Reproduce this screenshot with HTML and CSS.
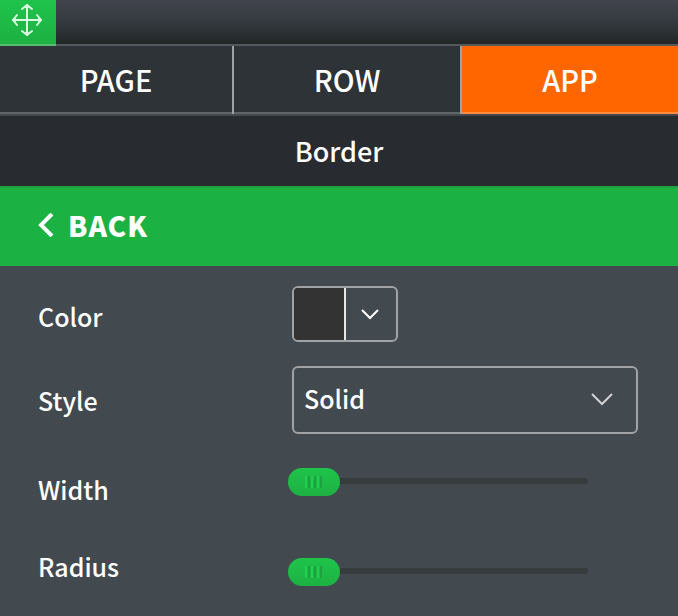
FILE: index.html
```html
<!DOCTYPE html>
<html lang="en">
<head>
  <meta charset="UTF-8">
  <title>Border</title>
  <link rel="stylesheet" href="styles.css">
</head>
<body>
  <div class="panel">
    <!-- Drag handle -->
    <header class="topbar">
      <button type="button" class="move" aria-label="Move panel">
        <svg width="32" height="34" viewBox="0 0 32 34" fill="none" stroke="#d9f7e1" stroke-width="2" stroke-linecap="round" stroke-linejoin="round">
          <path d="M16 2v30M2 17h28" />
          <path d="M11 6l5-4 5 4M11 28l5 4 5-4" />
          <path d="M6 12l-4 5 4 5M26 12l4 5-4 5" />
          <path d="M15 3h2v1h-2zM15 31h2v-1h-2zM3 16v2h1v-2zM29 16v2h-1v-2z" />
        </svg>
      </button>
    </header>

    <nav class="tabs">
      <button type="button" class="tab tab-page">PAGE</button>
      <button type="button" class="tab tab-row">ROW</button>
      <button type="button" class="tab tab-app active">APP</button>
    </nav>

    <h1 class="title">Border</h1>

    <button type="button" class="back">
      <svg width="16" height="24" viewBox="0 0 16 24" fill="none" stroke="#fff" stroke-width="4">
        <path d="M14 1L3 12l11 11" />
      </svg>
      BACK
    </button>

    <!-- Border settings -->
    <form class="settings">
      <div class="field field-color">
        <label for="color">Color</label>
        <div class="color-picker">
          <input type="color" id="color" value="#333333">
          <button type="button" class="color-toggle" aria-label="Choose color">
            <svg width="20" height="12" viewBox="0 0 20 12" fill="none" stroke="#fff" stroke-width="2">
              <path d="M1 2l8 8 8-8" />
            </svg>
          </button>
        </div>
      </div>

      <div class="field">
        <label for="style">Style</label>
        <div class="select-box">
          <select id="style">
            <option>Solid</option>
            <option>Dashed</option>
            <option>Dotted</option>
          </select>
          <svg class="arrow" width="22" height="14" viewBox="0 0 22 14" fill="none" stroke="#d0d2d3" stroke-width="2">
            <path d="M1 2l10 10L21 2" />
          </svg>
        </div>
      </div>

      <div class="field field-width">
        <label for="width">Width</label>
        <input type="range" id="width" min="0" max="20" value="0">
      </div>

      <div class="field field-radius">
        <label for="radius">Radius</label>
        <input type="range" id="radius" min="0" max="50" value="0">
      </div>
    </form>
  </div>
</body>
</html>
```
FILE: styles.css
```css
* {
  box-sizing: border-box;
}
body {
  margin: 0;
  background: #42494f;
  color: #fff;
  font-family: "Noto Sans CJK SC", "Noto Sans", sans-serif;
  font-weight: 500;
}
button,
select {
  margin: 0;
  padding: 0;
  border: 0;
  background: none;
  color: inherit;
  font: inherit;
}
svg {
  display: block;
}

/* top bar */
.topbar {
  display: flex;
  height: 46px;
  background: linear-gradient(#41444e, #353a40 45%, #222627 96%);
  box-shadow: inset 0 -2px #56595b;
}
.move {
  width: 56px;
  padding: 3px 11px 9px;
  background: linear-gradient(#1fc34a, #1db143);
  border-bottom: 2px solid #54bd6e;
}

/* tabs */
.tabs {
  display: flex;
  border-bottom: 2px solid #434a4f;
}
.tab {
  height: 68px;
  background: #2e3337;
  border-right: 2px solid #a0a3a5;
  box-shadow: inset 0 -2px #616568;
  font-size: 29px;
  line-height: 66px;
  padding-bottom: 2px;
}
.tab-page {
  flex: 232;
}
.tab-row {
  flex: 226;
}
.tab-app {
  flex: 216;
  border-right: 0;
}
.tab.active {
  background: #ff6600;
  box-shadow: inset 0 -2px #ff8b3f;
}

.title {
  margin: 0;
  background: #282b2f;
  font-size: 27px;
  font-weight: 500;
  line-height: 70px;
  text-align: center;
}
.back {
  display: flex;
  align-items: center;
  gap: 14px;
  width: 100%;
  height: 80px;
  padding: 0 38px 5px;
  background: #1cb143;
  border-top: 2px solid #1f9f40;
  font-size: 28px;
  font-weight: 900;
  letter-spacing: 1px;
}

/* settings */
.settings {
  padding: 20px 40px 20px 38px;
}
.field {
  display: grid;
  grid-template-columns: 250px 1fr;
  align-items: center;
  margin-bottom: 24px;
}
.field label {
  font-size: 25px;
  line-height: 34px;
}
.field-color label {
  padding-top: 4px;
}
.color-picker {
  display: flex;
  width: 106px;
  height: 56px;
  margin-left: 4px;
  border: 2px solid #a0a3a5;
  border-radius: 6px;
  overflow: hidden;
}
input[type="color"] {
  appearance: none;
  width: 52px;
  height: 52px;
  padding: 0;
  border: 0;
  border-right: 2px solid #e6e7e7;
  background: none;
}
input[type="color"]::-webkit-color-swatch-wrapper {
  padding: 0;
}
input[type="color"]::-webkit-color-swatch {
  border: 0;
  border-radius: 0;
}
.color-toggle {
  display: flex;
  flex: 1;
  align-items: center;
  justify-content: center;
}
.select-box {
  position: relative;
  margin-left: 4px;
}
select {
  display: block;
  appearance: none;
  width: 100%;
  height: 68px;
  padding: 0 10px 4px;
  border: 2px solid #a0a3a5;
  border-radius: 6px;
  font-size: 25px;
}
.arrow {
  position: absolute;
  top: 26px;
  right: 25px;
  pointer-events: none;
}

/* sliders */
input[type="range"] {
  appearance: none;
  width: 300px;
  height: 28px;
  margin: 0;
  background: none;
}
input[type="range"]::-webkit-slider-runnable-track {
  height: 6px;
  background: #363b3e;
  border-radius: 3px;
}
input[type="range"]::-webkit-slider-thumb {
  appearance: none;
  width: 52px;
  height: 28px;
  margin-top: -10px;
  border-radius: 14px;
  background:
    repeating-linear-gradient(90deg, #20d053 0 2px, #1eb945 2px 3px, #1ca340 3px 5px, #1eb945 5px 6px) center / 18px 12px no-repeat,
    linear-gradient(#1fc44a, #1db143);
}

/* the sliders sit off the label line */
.field-width {
  align-items: start;
  margin-top: 33px;
  margin-bottom: 36px;
}
.field-width label {
  height: 46px;
  padding-top: 5px;
}
.field-radius {
  align-items: start;
}
.field-radius input {
  margin-top: 8px;
}
```
